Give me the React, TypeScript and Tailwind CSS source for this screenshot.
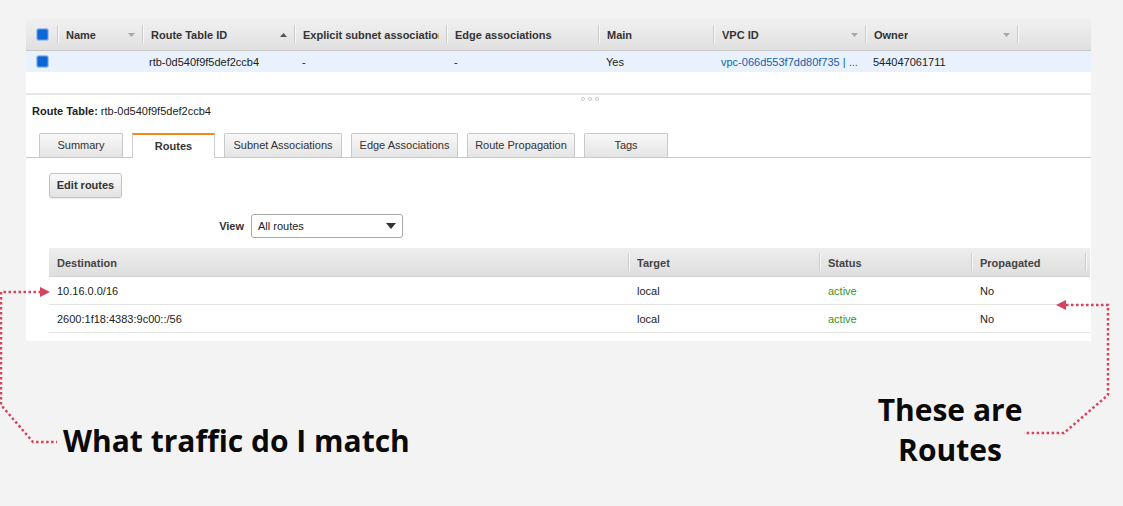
import type { ReactNode } from 'react';

const TOP_COLS = 'grid-cols-[31px_85px_152px_152px_152px_115px_152px_152px_1fr]';
const ROUTE_COLS = 'grid-cols-[579px_191px_152px_114px_1fr]';

const TABS = [
  { label: 'Summary', w: 'w-[84px]' },
  { label: 'Routes', w: 'w-[83px]', active: true },
  { label: 'Subnet Associations', w: 'w-[118px]' },
  { label: 'Edge Associations', w: 'w-[107px]' },
  { label: 'Route Propagation', w: 'w-[108px]' },
  { label: 'Tags', w: 'w-[84px]' },
];

const ROUTES = [
  { dest: '10.16.0.0/16', target: 'local', status: 'active', propagated: 'No' },
  { dest: '2600:1f18:4383:9c00::/56', target: 'local', status: 'active', propagated: 'No' },
];

function Checkbox() {
  return (
    <span className="block w-[13px] h-[13px] rounded-[3px] border border-[#a9c3e4] bg-[#0b67d6] shadow-[inset_0_0_0_1px_#3d86df]" />
  );
}

function SortArrow({ up, dark }: { up?: boolean; dark?: boolean }) {
  return (
    <svg width="7" height="4" viewBox="0 0 7 4" className="shrink-0">
      <path d={up ? 'M0 4 L3.5 0 L7 4 Z' : 'M0 0 L7 0 L3.5 4 Z'} fill={dark ? '#555' : '#a8a8a8'} />
    </svg>
  );
}

function HeadCell({ children, sort, first }: { children?: ReactNode; sort?: 'up' | 'down'; first?: boolean }) {
  return (
    <div className="flex items-center h-full">
      {!first && <span className="w-px h-[18px] bg-[#cdcdcd] shadow-[1px_0_0_#f7f7f7]" />}
      <div className="flex-1 flex items-center justify-between pl-2 pr-[7px] min-w-0 pt-[2px]">
        <span className="overflow-hidden whitespace-nowrap">{children}</span>
        {sort && <SortArrow up={sort === 'up'} dark={sort === 'up'} />}
      </div>
    </div>
  );
}

export default function App() {
  return (
    <div
      className="relative w-[1123px] h-[506px] overflow-hidden bg-[#f3f3f3] pt-[18px] pl-[26px] text-[11px] text-[#222]"
      style={{ fontFamily: '"Liberation Sans", Arial, sans-serif' }}
    >
      <div className="w-[1065px] h-[323px] bg-white flex flex-col">
        {/* route table list */}
        <div className={`grid ${TOP_COLS} h-[33px] bg-gradient-to-b from-[#f1f1f1] to-[#e0e0e0] border-b border-[#c9c9c9] font-bold text-[#333]`}>
          <div className="flex items-center pl-[10px]">
            <Checkbox />
          </div>
          <HeadCell sort="down">Name</HeadCell>
          <HeadCell sort="up">Route Table ID</HeadCell>
          <HeadCell>Explicit subnet association</HeadCell>
          <HeadCell>Edge associations</HeadCell>
          <HeadCell>Main</HeadCell>
          <HeadCell sort="down">VPC ID</HeadCell>
          <HeadCell sort="down">Owner</HeadCell>
          <HeadCell />
        </div>
        <div className={`grid ${TOP_COLS} h-[21px] bg-[#e9f1fc] items-center`}>
          <div className="pl-[10px]">
            <Checkbox />
          </div>
          <div />
          <div className="pl-[7px] pt-px">rtb-0d540f9f5def2ccb4</div>
          <div className="pl-2 pt-px">-</div>
          <div className="pl-2 pt-px">-</div>
          <div className="pl-2 pt-px">Yes</div>
          <div className="pl-2 pt-px text-[#135fb3] whitespace-nowrap overflow-hidden">vpc-066d553f7dd80f735 | ...</div>
          <div className="pl-2 pt-px">544047061711</div>
          <div />
        </div>
        <div className="h-[21px]" />
        <div className="h-[2px] bg-[#e6e6e6]" />

        {/* resize handle */}
        <div className="h-[10px] flex gap-[3px] pl-[555px] pt-[2px]">
          <span className="w-[4px] h-[4px] rounded-full border border-[#c9c9c9]" />
          <span className="w-[4px] h-[4px] rounded-full border border-[#c9c9c9]" />
          <span className="w-[4px] h-[4px] rounded-full border border-[#c9c9c9]" />
        </div>

        {/* details */}
        <div className="pl-[6px] h-[12px] leading-[12px]">
          <span className="font-bold">Route Table:</span> rtb-0d540f9f5def2ccb4
        </div>

        <div className="mt-[16px] flex gap-[9px] pl-[13px] border-b border-[#c9c9c9] h-[25px]">
          {TABS.map((tab) => (
            <div
              key={tab.label}
              className={
                tab.active
                  ? `${tab.w} h-[25px] -mb-px flex items-center justify-center bg-white border-x border-[#cfcfcf] border-t-2 border-t-[#f0891e] font-bold text-[#333]`
                  : `${tab.w} h-[24px] flex items-center justify-center bg-gradient-to-b from-[#f8f8f8] to-[#e4e4e4] border border-b-0 border-[#c9c9c9] rounded-t-[2px] text-[#333]`
              }
            >
              {tab.label}
            </div>
          ))}
        </div>

        <div className="pl-[23px] mt-[15px]">
          <button className="w-[73px] h-[25px] rounded-[3px] border border-[#c2c2c2] bg-gradient-to-b from-[#fafafa] to-[#e2e2e2] shadow-[0_1px_1px_rgba(0,0,0,0.08)] font-bold text-[#333]">
            Edit routes
          </button>
        </div>

        <div className="pl-[23px] mt-[16px] flex items-center h-[24px]">
          <span className="w-[195px] text-right font-bold text-[#333]">View</span>
          <div className="ml-[7px] w-[152px] h-[24px] rounded-[3px] border border-[#aaaaaa] bg-white flex items-center justify-between pl-[6px] pr-[6px]">
            <span>All routes</span>
            <svg width="10" height="6" viewBox="0 0 10 6">
              <path d="M0 0 L10 0 L5 6 Z" fill="#333" />
            </svg>
          </div>
        </div>

        {/* routes table */}
        <div className="ml-[23px] mt-[10px] w-[1041px]">
          <div className={`grid ${ROUTE_COLS} h-[29px] bg-gradient-to-b from-[#eeeeee] to-[#dedede] border-b border-[#d2d2d2] font-bold text-[#444]`}>
            <HeadCell first>Destination</HeadCell>
            <HeadCell>Target</HeadCell>
            <HeadCell>Status</HeadCell>
            <HeadCell>Propagated</HeadCell>
            <HeadCell />
          </div>
          {ROUTES.map((r) => (
            <div key={r.dest} className={`grid ${ROUTE_COLS} h-[28px] items-center border-b border-[#e4e4e4] pt-[2px]`}>
              <div className="pl-2">{r.dest}</div>
              <div className="pl-[9px]">{r.target}</div>
              <div className="pl-[9px] text-[#2b9b2b]">{r.status}</div>
              <div className="pl-[9px]">{r.propagated}</div>
              <div />
            </div>
          ))}
        </div>
      </div>

      {/* callout arrows */}
      <svg className="absolute inset-0 pointer-events-none" width="1123" height="506" viewBox="0 0 1123 506">
        <g fill="none" stroke="#d6435c" strokeWidth="2.5" strokeDasharray="2.5 2.5">
          <polyline points="41,292 1,292 1,405 33,442 57,442" />
          <polyline points="1066,305 1108,305 1108,395 1064,433 1024,433" />
        </g>
        <polygon points="40,287 50,292 40,297" fill="#d6435c" />
        <polygon points="1056,305 1066,300 1066,310" fill="#d6435c" />
      </svg>

      {/* callout labels */}
      <div
        className="absolute left-[63px] top-[421px] text-[30px] leading-[40px] font-bold text-[#0a0a0a] whitespace-nowrap"
        style={{ fontFamily: '"Open Sans", sans-serif' }}
      >
        What traffic do I match
      </div>
      <div
        className="absolute left-[850px] top-[390px] w-[200px] text-center text-[30px] leading-[40px] font-bold text-[#0a0a0a]"
        style={{ fontFamily: '"Open Sans", sans-serif' }}
      >
        These are
        <br />
        Routes
      </div>
    </div>
  );
}
